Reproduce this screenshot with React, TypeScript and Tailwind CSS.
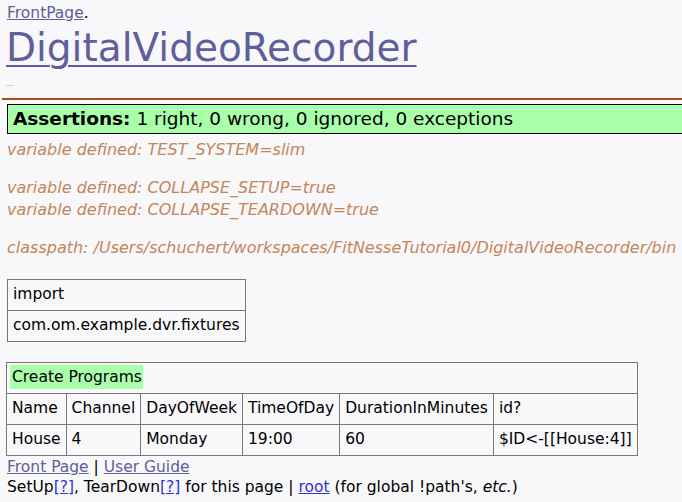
export default function App() {
  const f = { fontFamily: '"DejaVu Sans", "Liberation Sans", sans-serif' };
  const cell = "border border-[#777] px-[5px] h-[31px] align-middle";
  return (
    <div className="w-[682px] h-[502px] bg-[#f8f8fa] overflow-hidden text-[15.5px] text-black" style={f}>
      <div className="pl-[7px] pt-[4px] leading-[18px]">
        <a className="text-[#5f5f9a] underline">FrontPage</a>.
      </div>
      <div className="pl-[6px] pt-[1px] leading-[50px] text-[39px] text-[#5f5f9a]">
        <a className="underline decoration-[2px] underline-offset-[4px]">DigitalVideoRecorder</a>
      </div>
      <div className="pl-[6px] h-[25px] pt-[12px]"><div className="w-[8px] h-[1px] bg-[#d8c8d8]" /></div>
      <div className="h-[2px] bg-[#a0501a] ml-[2px]" />
      <div className="pl-[7px] pt-[4px]">
        <div className="h-[30px] border border-black bg-[#aaffaa] w-[700px] pl-[5px] text-[18.5px] leading-[28px]">
          <b>Assertions:</b> 1 right, 0 wrong, 0 ignored, 0 exceptions
        </div>
        <div className="italic text-[#c4855a] text-[16px] leading-[22px] pt-[5px]">
          <div>variable defined: TEST_SYSTEM=slim</div>
          <div className="h-[16px]" />
          <div>variable defined: COLLAPSE_SETUP=true</div>
          <div>variable defined: COLLAPSE_TEARDOWN=true</div>
          <div className="h-[16px]" />
          <div>classpath: /Users/schuchert/workspaces/FitNesseTutorial0/DigitalVideoRecorder/bin</div>
        </div>
        <table className="border-collapse mt-[20px]">
          <tbody>
            <tr><td className={cell}>import</td></tr>
            <tr><td className={cell}>com.om.example.dvr.fixtures</td></tr>
          </tbody>
        </table>
        <table className="border-collapse mt-[20px] -ml-[1px]">
          <tbody>
            <tr>
              <td className={cell} colSpan={6}><span className="bg-[#aaffaa] py-[3px] pr-[1px] -ml-[2px] pl-[2px]">Create Programs</span></td>
            </tr>
            <tr>
              <td className={cell}>Name</td>
              <td className={cell}>Channel</td>
              <td className={cell}>DayOfWeek</td>
              <td className={cell}>TimeOfDay</td>
              <td className={cell}>DurationInMinutes</td>
              <td className={cell}>id?</td>
            </tr>
            <tr>
              <td className={cell}>House</td>
              <td className={cell}>4</td>
              <td className={cell}>Monday</td>
              <td className={cell}>19:00</td>
              <td className={cell}>60</td>
              <td className={cell}>$ID&lt;-[[House:4]]</td>
            </tr>
          </tbody>
        </table>
        <div className="leading-[20px] pt-[1px]">
          <a className="text-[#5f5f9a] underline">Front Page</a> | <a className="text-[#5f5f9a] underline">User Guide</a>
        </div>
        <div className="leading-[20px]">
          SetUp<a className="text-[#3333cc] underline">[?]</a>, TearDown<a className="text-[#3333cc] underline">[?]</a> for this page | <a className="text-[#3333cc] underline">root</a> (for global !path's, <i>etc.</i>)
        </div>
      </div>
    </div>
  );
}
